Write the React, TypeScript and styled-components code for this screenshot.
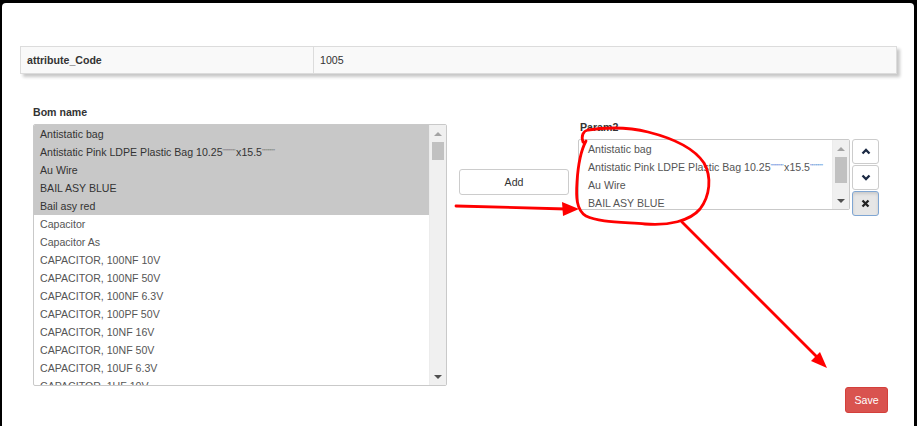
import React from "react";
import styled, { createGlobalStyle } from "styled-components";

const Global = createGlobalStyle`
  html, body { margin: 0; padding: 0; background: #000; }
  body { font-family: "Liberation Sans", Arial, sans-serif; }
  * { box-sizing: border-box; }
`;

const Page = styled.div`
  width: 917px;
  height: 426px;
  overflow: hidden;
  background: #000;
  padding: 3px 3px 0 2px;
`;

const Panel = styled.div`
  position: relative;
  height: 423px;
  background: #fff;
  border-radius: 4px 4px 0 0;
  padding: 43px 17px 0 18px;
  font-size: 10.6px;
  color: #333;
`;

const InfoTable = styled.div`
  display: grid;
  grid-template-columns: 293px 1fr;
  height: 28px;
  border: 1px solid #dcdcdc;
  background: #f9f9f9;
  box-shadow: 3px 3px 3px #c8c8c8;
`;

const Cell = styled.div<{ $bold?: boolean; $divider?: boolean }>`
  padding: 0 6px;
  line-height: 26px;
  font-weight: ${(p) => (p.$bold ? 700 : 400)};
  border-right: ${(p) => (p.$divider ? "1px solid #dcdcdc" : "none")};
`;

const Section = styled.div`
  display: flex;
  align-items: flex-start;
  margin-top: 31px;
  padding-left: 13px;
`;

const Column = styled.div<{ $top?: number; $left?: number }>`
  display: flex;
  flex-direction: column;
  margin-top: ${(p) => p.$top ?? 0}px;
  margin-left: ${(p) => p.$left ?? 0}px;
`;

const Label = styled.div<{ $indent?: number }>`
  font-weight: 700;
  line-height: 15px;
  margin-bottom: 4px;
  padding-left: ${(p) => p.$indent ?? 0}px;
  color: #333;
`;

const ListBox = styled.div<{ $w: number; $h: number }>`
  display: flex;
  width: ${(p) => p.$w}px;
  height: ${(p) => p.$h}px;
  border: 1px solid #c9c9c9;
  border-radius: 2px;
  background: #fff;
  overflow: hidden;
`;

const Items = styled.div`
  flex: 1;
  overflow: hidden;
`;

const Item = styled.div<{ $selected?: boolean; $pad: number }>`
  height: 18px;
  line-height: 18px;
  padding-left: ${(p) => p.$pad}px;
  white-space: nowrap;
  color: ${(p) => (p.$selected ? "#333" : "#555")};
  background: ${(p) => (p.$selected ? "#c8c8c8" : "transparent")};
`;

const Ticks = styled.span<{ $blue?: boolean }>`
  font-size: 7px;
  letter-spacing: -0.4px;
  vertical-align: 2px;
  color: ${(p) => (p.$blue ? "#4a86d8" : "#777")};
  margin-right: 1px;
`;

const Scrollbar = styled.div`
  width: 17px;
  display: flex;
  flex-direction: column;
  background: #f0f0f0;
  border-left: 1px solid #ececec;
`;

const ArrowCell = styled.div`
  height: 17px;
  display: flex;
  align-items: center;
  justify-content: center;
`;

const Tri = styled.div<{ $down?: boolean }>`
  width: 0;
  height: 0;
  border-left: 4px solid transparent;
  border-right: 4px solid transparent;
  ${(p) =>
    p.$down
      ? "border-top: 4px solid #505050;"
      : "border-bottom: 4px solid #a3a3a3;"}
`;

const Track = styled.div`
  flex: 1;
  padding: 0 2px;
`;

const Thumb = styled.div<{ $h: number }>`
  height: ${(p) => p.$h}px;
  background: #c1c1c1;
`;

const Button = styled.button<{ $w: number; $h: number }>`
  width: ${(p) => p.$w}px;
  height: ${(p) => p.$h}px;
  border: 1px solid #ccc;
  border-radius: 3px;
  background: #fff;
  color: #333;
  font-family: inherit;
  font-size: 10.6px;
  padding: 0;
  cursor: pointer;
`;

const IconStack = styled.div`
  display: flex;
  flex-direction: column;
  gap: 1px;
`;

const IconButton = styled.button<{ $active?: boolean }>`
  width: 27px;
  height: 25px;
  display: flex;
  align-items: center;
  justify-content: center;
  border: 1px solid ${(p) => (p.$active ? "#7fa6d3" : "#ccc")};
  border-radius: 3px;
  background: ${(p) => (p.$active ? "#e6e6e6" : "#fff")};
  box-shadow: ${(p) => (p.$active ? "inset 0 2px 3px rgba(0,0,0,0.12)" : "none")};
  padding: 0;
`;

const Footer = styled.div`
  display: flex;
  justify-content: flex-end;
  margin-top: 1px;
  padding-right: 9px;
`;

const SaveButton = styled.button`
  width: 43px;
  height: 26px;
  border: 1px solid #d43f3a;
  border-radius: 3px;
  background: #d9534f;
  color: #fff;
  font-family: inherit;
  font-size: 10.6px;
  padding: 0;
`;

const Overlay = styled.svg`
  position: absolute;
  top: -3px;
  left: -2px;
  pointer-events: none;
`;

type Row = { text: string; ticks?: boolean };

const bomRows: Row[] = [
  { text: "Antistatic bag" },
  { text: "Antistatic Pink LDPE Plastic Bag", ticks: true },
  { text: "Au Wire" },
  { text: "BAIL ASY BLUE" },
  { text: "Bail asy red" },
  { text: "Capacitor" },
  { text: "Capacitor As" },
  { text: "CAPACITOR, 100NF 10V" },
  { text: "CAPACITOR, 100NF 50V" },
  { text: "CAPACITOR, 100NF 6.3V" },
  { text: "CAPACITOR, 100PF 50V" },
  { text: "CAPACITOR, 10NF 16V" },
  { text: "CAPACITOR, 10NF 50V" },
  { text: "CAPACITOR, 10UF 6.3V" },
  { text: "CAPACITOR, 1UF 10V" },
];

const paramRows: Row[] = bomRows.slice(0, 4);

function RowText({ row, blue }: { row: Row; blue?: boolean }) {
  if (!row.ticks) return <>{row.text}</>;
  return (
    <>
      {row.text} 10.25<Ticks $blue={blue}>""""""</Ticks>x15.5
      <Ticks $blue={blue}>""""""</Ticks>
    </>
  );
}

function FakeScroll({ thumb }: { thumb: number }) {
  return (
    <Scrollbar>
      <ArrowCell>
        <Tri />
      </ArrowCell>
      <Track>
        <Thumb $h={thumb} />
      </Track>
      <ArrowCell>
        <Tri $down />
      </ArrowCell>
    </Scrollbar>
  );
}

export default function App() {
  return (
    <Page>
      <Global />
      <Panel>
        <InfoTable>
          <Cell $bold $divider>
            attribute_Code
          </Cell>
          <Cell>1005</Cell>
        </InfoTable>

        <Section>
          <Column>
            <Label>Bom name</Label>
            <ListBox $w={414} $h={262}>
              <Items>
                {bomRows.map((r, i) => (
                  <Item key={i} $pad={6} $selected={i < 5}>
                    <RowText row={r} />
                  </Item>
                ))}
              </Items>
              <FakeScroll thumb={18} />
            </ListBox>
          </Column>

          <Column $top={64} $left={12}>
            <Button $w={110} $h={26}>
              Add
            </Button>
          </Column>

          <Column $top={15} $left={9}>
            <Label $indent={2}>Param2</Label>
            <ListBox $w={272} $h={71}>
              <Items>
                {paramRows.map((r, i) => (
                  <Item key={i} $pad={9}>
                    <RowText row={r} blue />
                  </Item>
                ))}
              </Items>
              <FakeScroll thumb={26} />
            </ListBox>
          </Column>

          <Column $top={34} $left={2}>
            <IconStack>
              <IconButton aria-label="Move up">
                <svg width="10" height="7" viewBox="0 0 10 7">
                  <path d="M1.5 5.5 L5 2 L8.5 5.5" fill="none" stroke="#1c2a44" strokeWidth="2.3" />
                </svg>
              </IconButton>
              <IconButton aria-label="Move down">
                <svg width="10" height="7" viewBox="0 0 10 7">
                  <path d="M1.5 1.5 L5 5 L8.5 1.5" fill="none" stroke="#1c2a44" strokeWidth="2.3" />
                </svg>
              </IconButton>
              <IconButton $active aria-label="Remove">
                <svg width="9" height="9" viewBox="0 0 9 9">
                  <path d="M1.5 1.5 L7.5 7.5 M7.5 1.5 L1.5 7.5" fill="none" stroke="#222" strokeWidth="2.3" />
                </svg>
              </IconButton>
            </IconStack>
          </Column>
        </Section>

        <Footer>
          <SaveButton>Save</SaveButton>
        </Footer>

        <Overlay width="917" height="426" viewBox="0 0 917 426">
          <g stroke="#ff0000" fill="none" strokeWidth="2.8" strokeLinecap="round" strokeLinejoin="round">
            <path d="M456 206 L566 209" />
            <path d="M583 142 C581 136 583 131 588 130 C600 128 625 126 648 132 C672 138 694 148 704 163 C712 177 710 196 700 209 C690 221 668 226 645 224 C620 222 598 222 586 216 C576 210 576 196 577 182 C578 166 580 152 586 141" />
            <path d="M682 222 L818 358" />
          </g>
          <g fill="#ff0000">
            <path d="M579 209 L562 202 L563 216 Z" />
            <path d="M827 368 L811 361 L820 352 Z" />
          </g>
        </Overlay>
      </Panel>
    </Page>
  );
}
